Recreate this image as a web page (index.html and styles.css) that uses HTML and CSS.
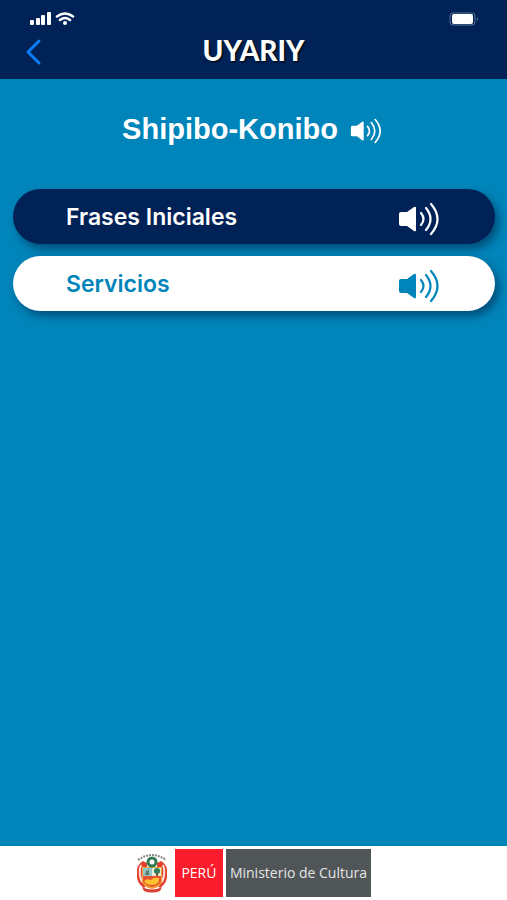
FILE: index.html
```html
<!DOCTYPE html>
<html lang="es">
<head>
    <meta charset="UTF-8">
    <meta name="viewport" content="width=device-width, initial-scale=1.0">
    <title>Uyariy</title>
    <link rel="stylesheet" href="styles.css">
</head>
<body>
    <svg class="symbols" aria-hidden="true">
        <symbol id="speaker" viewBox="0 0 40 34">
            <path d="M2 10h6l7-5q2-1 2 1v22q0 2-2 1l-7-5H2q-2 0-2-2V12q0-2 2-2z" fill="currentColor"/>
            <path d="M22 11q5 6 0 12M27 6q9 11 0 22M32 2q13 15 0 30" fill="none" stroke="currentColor" stroke-width="2.200" stroke-linecap="round"/>
        </symbol>
    </svg>

    <header class="header">
        <div class="status-bar">
            <svg class="signal" viewBox="0 0 46 14" aria-hidden="true">
                <g fill="#fff">
                    <rect x="0" y="8" width="4" height="5" rx="1"/>
                    <rect x="6" y="6" width="4" height="7" rx="1"/>
                    <rect x="11" y="3" width="4" height="10" rx="1"/>
                    <rect x="17" y="0" width="4" height="13" rx="1"/>
                    <circle cx="35" cy="11" r="2"/>
                </g>
                <path d="M27 4.500q8-6 16 0M30 8q5-4 10 0" fill="none" stroke="#fff" stroke-width="2.500" stroke-linecap="round"/>
            </svg>
            <svg class="battery" viewBox="0 0 30 14" aria-hidden="true">
                <rect x="1" y="1" width="25" height="12" rx="3" fill="none" stroke="#5d759a"/>
                <rect x="3" y="2" width="21" height="10" rx="2" fill="#fff"/>
                <path d="M28 5q2 2 0 4z" fill="#5d759a"/>
            </svg>
        </div>
        <div class="nav-bar">
            <button class="back" type="button" aria-label="Volver">
                <svg viewBox="0 0 18 28"><path d="M15 3L4 14l11 11" fill="none" stroke="#0a7cf5" stroke-width="3" stroke-linecap="round" stroke-linejoin="round"/></svg>
            </button>
            <div class="brand">UYARIY</div>
        </div>
    </header>

    <main class="content">
        <div class="language">
            <h1>Shipibo-Konibo</h1>
            <button class="listen" type="button" aria-label="Escuchar Shipibo-Konibo">
                <svg viewBox="0 0 40 34"><use href="#speaker"/></svg>
            </button>
        </div>
        <div class="options">
            <button class="option option-dark" type="button">
                <span>Frases Iniciales</span>
                <svg viewBox="0 0 40 34" aria-hidden="true"><use href="#speaker"/></svg>
            </button>
            <button class="option" type="button">
                <span>Servicios</span>
                <svg viewBox="0 0 40 34" aria-hidden="true"><use href="#speaker"/></svg>
            </button>
        </div>
    </main>

    <footer class="footer">
        <svg class="crest" viewBox="0 0 32 40" aria-hidden="true">
            <path d="M2 7Q16-3 30 7" fill="none" stroke="#8b8580" stroke-width="2" stroke-dasharray="2 1"/>
            <!-- flags -->
            <path d="M7 8Q0 12 1 20q-1 10 7 15l3-3V10zM25 8q7 4 6 12 1 10-7 15l-3-3V10z" fill="#e2412f"/>
            <path d="M5 12q-3 8 1 17M27 12q3 8-1 17" fill="none" stroke="#fbe3dc" stroke-width="2"/>
            <!-- shield -->
            <path d="M6 14h20v13q0 7-10 9Q6 34 6 27z" fill="#f3a53a"/>
            <rect x="7" y="15" width="9" height="8" fill="#8fc6c4"/>
            <rect x="16" y="15" width="9" height="8" fill="#e8ecd2"/>
            <path d="M9 22l1-4 3-1v5z" fill="#5e7d72"/>
            <circle cx="21" cy="18" r="3" fill="#2e7d5b"/>
            <path d="M20 20h2v3h-2z" fill="#7a5a35"/>
            <path d="M7 23h18v5q-2 5-9 6-7-1-9-6z" fill="#e8512f"/>
            <path d="M8 28q3-3 7-1 2-3 8-2 1 7-7 7-6 0-8-4z" fill="#fbc02d"/>
            <!-- wreath -->
            <circle cx="16" cy="9" r="4" fill="#fff" stroke="#327a50" stroke-width="3"/>
            <path d="M6 34q10 5 20 0l-2 4q-8 3-16 0z" fill="#d93f35"/>
        </svg>
        <div class="country">PERÚ</div>
        <div class="ministry">Ministerio de Cultura</div>
    </footer>
</body>
</html>
```

FILE: styles.css
```css
* {
    box-sizing: border-box;
}
body {
    display: flex;
    flex-direction: column;
    min-height: 100vh;
    margin: 0;
    font-family: Inter, "Liberation Sans", sans-serif;
    color: #fff;
    background-color: #0085ba;
}
button {
    padding: 0;
    border: none;
    color: inherit;
    background: none;
    font: inherit;
    cursor: pointer;
}
svg {
    display: block;
}
.symbols {
    position: absolute;
    width: 0;
    height: 0;
}

/* Header */
.header {
    padding: 12px 28px 12px 24px;
    background-color: #002257;
}
.status-bar {
    display: flex;
    justify-content: space-between;
    padding-left: 6px;
}
.signal {
    width: 46px;
    height: 14px;
}
.battery {
    width: 30px;
    height: 14px;
}
.nav-bar {
    display: grid;
    grid-template-columns: 32px 1fr 28px;
    align-items: center;
    padding-top: 7px;
}
.back svg {
    width: 18px;
    height: 28px;
    margin-top: 4px;
}
.brand {
    font-family: Lato, sans-serif;
    font-size: 28px;
    font-weight: 900;
    line-height: 34px;
    text-align: center;
    text-shadow: 1px 1px 2px #000;
}

/* Language and its phrase groups */
.content {
    flex: 1;
    padding: 32px 12px 32px 13px;
}
.language {
    display: flex;
    justify-content: center;
    align-items: center;
    gap: 12px;
    padding-right: 4px;
}
h1 {
    margin: 0;
    font-family: "Liberation Sans", sans-serif;
    font-size: 29px;
    line-height: 36px;
}
.listen svg {
    width: 32px;
    height: 26px;
    margin-top: 4px;
}
.options {
    display: grid;
    gap: 12px;
    margin-top: 42px;
}
.option {
    display: flex;
    justify-content: space-between;
    align-items: center;
    height: 55px;
    padding: 0 56px 0 53px;
    border-radius: 28px;
    color: #0085ba;
    background-color: #fff;
    box-shadow: 4px 5px 8px rgba(0, 25, 60, 0.5);
    font-size: 23px;
    font-weight: 600;
}
.option-dark {
    color: #fff;
    background-color: #002257;
}
.option svg {
    width: 40px;
    height: 34px;
    margin-top: 4px;
}

/* Footer */
.footer {
    display: flex;
    justify-content: center;
    padding: 3px 0;
    background-color: #fff;
    font-family: "Open Sans", sans-serif;
    font-size: 14px;
    line-height: 48px;
}
.crest {
    width: 32px;
    height: 40px;
    margin: 4px 7px 0 0;
}
.country {
    width: 48px;
    margin-right: 3px;
    background-color: #fa1c2b;
    text-align: center;
}
.ministry {
    padding: 0 4px;
    color: #e4e5e6;
    background-color: #505558;
}
```
